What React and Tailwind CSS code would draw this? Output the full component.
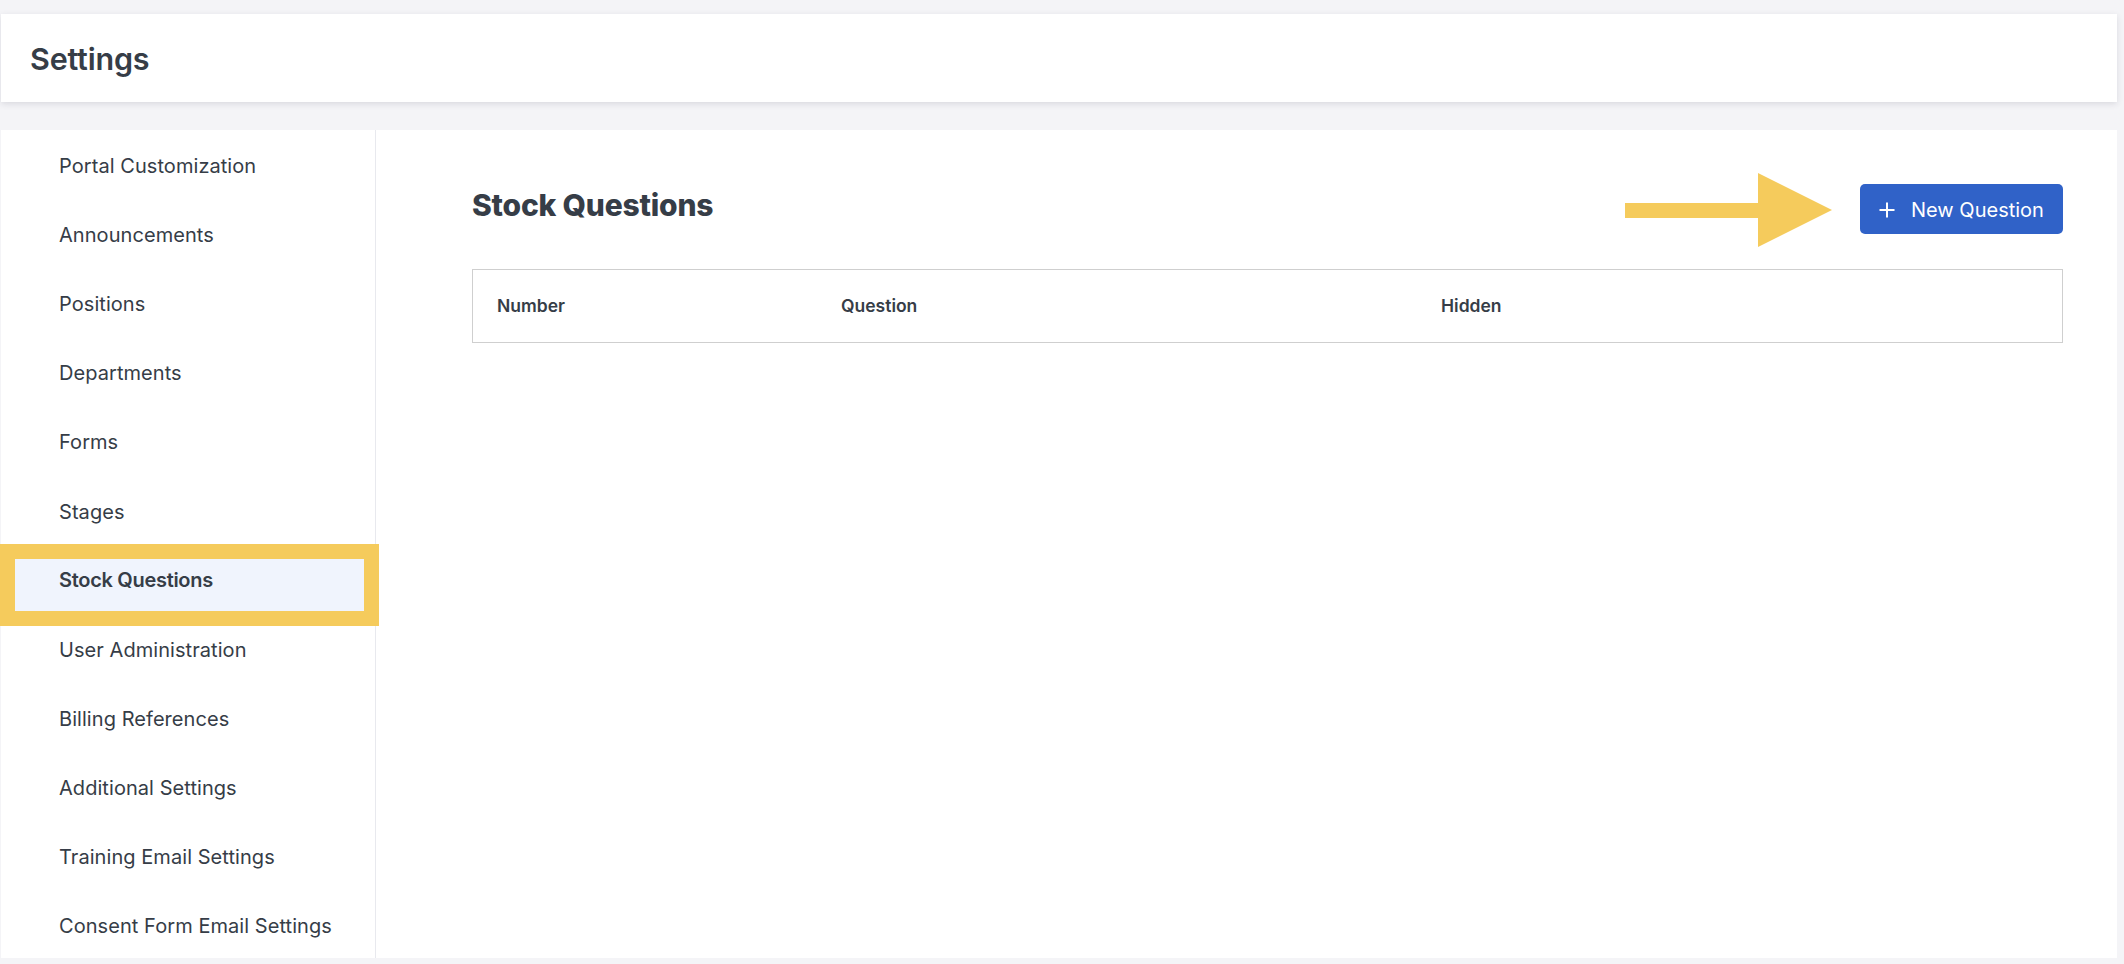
import React from "react";

const items = ["Portal Customization","Announcements","Positions","Departments","Forms","Stages","Stock Questions","User Administration","Billing References","Additional Settings","Training Email Settings","Consent Form Email Settings"];

function Plus() {
  return (
    <svg width="16" height="16" viewBox="0 0 16 16" className="shrink-0">
      <path d="M8 0.5V15.5M0.5 8H15.5" stroke="white" strokeWidth="2" fill="none" />
    </svg>
  );
}

export default function App() {
  return (
    <div className="relative h-[964px] overflow-hidden bg-[#f4f4f7] pt-[14px] pl-px pr-[7px] font-['Inter',sans-serif] text-[#363d47]">
      <header className="flex h-[88px] items-center bg-white pl-[29px] pt-[1px] shadow-[0_2px_6px_rgba(30,30,60,0.12)]">
        <h1 className="text-[30.5px] font-semibold tracking-[-0.2px]">Settings</h1>
      </header>
      <div className="mt-[28px] flex h-[828px] bg-white">
        <nav className="h-full w-[375px] shrink-0 border-r border-[#e8e9ee] pl-[58px] pt-[1.5px]">
          <ul>
            {items.map((t) => (
              <li key={t} className="flex h-[69.1px] items-center whitespace-nowrap text-[20px] font-[370] tracking-[0.06px]">{t}</li>
            ))}
          </ul>
        </nav>
        <main className="min-w-0 flex-1 pl-[96px] pr-[54px] pt-[54px]">
          <div className="flex h-[85px] items-start justify-between">
            <h2 className="mt-[-1px] text-[30px] font-extrabold leading-[44px] tracking-[-0.2px]">Stock Questions</h2>
            <button className="flex h-[50px] w-[203px] items-center gap-[16px] rounded-[5px] bg-[#3062c8] pl-[19px] pt-px text-[20px] font-[370] text-white">
              <Plus />
              <span className="tracking-[0px]">New Question</span>
            </button>
          </div>
          <div className="grid h-[74px] grid-cols-[344px_600px_1fr] items-center border-[1.5px] border-[#cfcfcf] pl-[24px] text-[17.5px] font-semibold">
            <span>Number</span>
            <span>Question</span>
            <span>Hidden</span>
          </div>
        </main>
      </div>

      <div className="absolute left-0 top-[544px] h-[82px] w-[379px] border-[15px] border-[#f5cb5c] bg-[#f0f4fd] pl-[44px] text-[20px] font-semibold leading-[42px] tracking-[-0.3px]">Stock Questions</div>
      <svg className="absolute left-[1625px] top-[173px]" width="208" height="74" viewBox="0 0 208 74">
        <path d="M0 30H133V0L207 37L133 74V45H0Z" fill="#f5cb5c" />
      </svg>
    </div>
  );
}
